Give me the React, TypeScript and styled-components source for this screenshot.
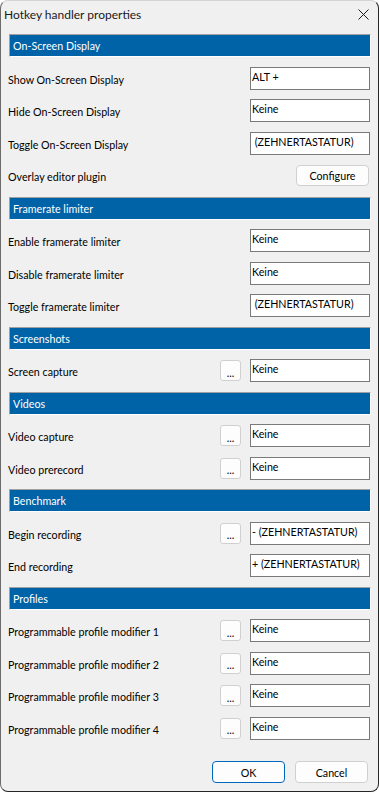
import React from "react";
import styled, { createGlobalStyle } from "styled-components";

type Binding = {
  label: string;
  value?: string;
  picker?: boolean;
  action?: string;
};

type Section = {
  title: string;
  rows: Binding[];
};

const sections: Section[] = [
  {
    title: "On-Screen Display",
    rows: [
      { label: "Show On-Screen Display", value: "ALT +" },
      { label: "Hide On-Screen Display", value: "Keine" },
      { label: "Toggle On-Screen Display", value: " (ZEHNERTASTATUR)" },
      { label: "Overlay editor plugin", action: "Configure" },
    ],
  },
  {
    title: "Framerate limiter",
    rows: [
      { label: "Enable framerate limiter", value: "Keine" },
      { label: "Disable framerate limiter", value: "Keine" },
      { label: "Toggle framerate limiter", value: " (ZEHNERTASTATUR)" },
    ],
  },
  {
    title: "Screenshots",
    rows: [{ label: "Screen capture", value: "Keine", picker: true }],
  },
  {
    title: "Videos",
    rows: [
      { label: "Video capture", value: "Keine", picker: true },
      { label: "Video prerecord", value: "Keine", picker: true },
    ],
  },
  {
    title: "Benchmark",
    rows: [
      { label: "Begin recording", value: "- (ZEHNERTASTATUR)", picker: true },
      { label: "End recording", value: "+ (ZEHNERTASTATUR)" },
    ],
  },
  {
    title: "Profiles",
    rows: [
      { label: "Programmable profile modifier 1", value: "Keine", picker: true },
      { label: "Programmable profile modifier 2", value: "Keine", picker: true },
      { label: "Programmable profile modifier 3", value: "Keine", picker: true },
      { label: "Programmable profile modifier 4", value: "Keine", picker: true },
    ],
  },
];

const App = () => {
  return (
    <>
      <GlobalStyle />
      <Dialog>
        <TitleBar>
          <Title>Hotkey handler properties</Title>
          <CloseButton>
            <svg width="11" height="11" viewBox="0 0 11 11">
              <path d="M0.5 0.5 L10.5 10.5 M10.5 0.5 L0.5 10.5" stroke="#1b1b1b" strokeWidth="1" fill="none" />
            </svg>
          </CloseButton>
        </TitleBar>
        <Content>
          {sections.map((section) => (
            <React.Fragment key={section.title}>
              <SectionHeader>{section.title}</SectionHeader>
              {section.rows.map((row) => (
                <Row key={row.label}>
                  <Label>{row.label}</Label>
                  {row.picker && <DotsButton>...</DotsButton>}
                  {row.action ? (
                    <ConfigureButton>{row.action}</ConfigureButton>
                  ) : (
                    <KeyField>{row.value}</KeyField>
                  )}
                </Row>
              ))}
            </React.Fragment>
          ))}
        </Content>
        <Footer>
          <DialogButton $primary>OK</DialogButton>
          <DialogButton>Cancel</DialogButton>
        </Footer>
      </Dialog>
    </>
  );
};
export default App;

// dialog text is the 8pt shell font, the caption is a bit larger
const GlobalStyle = createGlobalStyle`
  body {
    margin: 0;
    background: #ffffff;
    font-family: Lato, "Liberation Sans", sans-serif;
    font-size: 10.7px;
    color: #000;
  }
`;

const Dialog = styled.div`
  width: 379px;
  height: 792px;
  box-sizing: border-box;
  background: #f0f0f0;
  border: 1px solid #262626;
  border-top-color: #d4d4d4;
  border-left-color: #6b6b6b;
  border-radius: 8px;
  overflow: hidden;

  display: flex;
  flex-direction: column;
`;

const TitleBar = styled.div`
  height: 27px;
  padding-left: 3px;

  display: flex;
  align-items: center;
  justify-content: space-between;
`;

const Title = styled.span`
  font-size: 12px;
  color: #1a1a1a;
`;

const CloseButton = styled.div`
  width: 29px;
  height: 27px;

  display: flex;
  align-items: center;
  justify-content: center;
`;

const Content = styled.div`
  padding: 6px 7px 0 8px;

  display: flex;
  flex-direction: column;
  gap: 9.5px;
`;

const SectionHeader = styled.div`
  height: 23px;
  box-sizing: border-box;
  padding-left: 3px;
  background: #0063a7;
  color: #ffffff;
  border-top: 1px solid #a0a0a0;
  border-left: 1px solid #a0a0a0;
  border-bottom: 1px solid #ffffff;
  border-right: 1px solid #ffffff;

  display: flex;
  align-items: center;
`;

const Row = styled.div`
  height: 23px;

  display: flex;
  align-items: center;
`;

const Label = styled.span`
  flex: 1;
  margin-left: -1px;
  padding-top: 2px;
`;

// top-aligned text like a win32 edit control
const KeyField = styled.div`
  width: 120px;
  height: 23px;
  box-sizing: border-box;
  margin-left: 9px;
  margin-right: 1px;
  padding: 1px 2px 0 1px;
  background: #ffffff;
  border: 1px solid #7a7a7a;
  line-height: 16px;
  white-space: pre;
  overflow: hidden;
`;

const PushButton = styled.div`
  height: 21px;
  box-sizing: border-box;
  background: #fdfdfd;
  border: 1px solid #d0d0d0;
  border-radius: 4px;

  display: flex;
  align-items: center;
  justify-content: center;
`;

const DotsButton = styled(PushButton)`
  width: 21px;
  border-radius: 3px;
  padding-top: 3px;
`;

const ConfigureButton = styled(PushButton)`
  width: 73px;
  margin-right: 2px;
`;

const Footer = styled.div`
  margin-top: auto;
  padding: 0 10px 8px 0;

  display: flex;
  justify-content: flex-end;
  gap: 10px;
`;

const DialogButton = styled(PushButton)<{ $primary?: boolean }>`
  width: 73px;
  height: 22px;
  border-color: ${(p) => (p.$primary ? "#0067c0" : "#d0d0d0")};
`;
